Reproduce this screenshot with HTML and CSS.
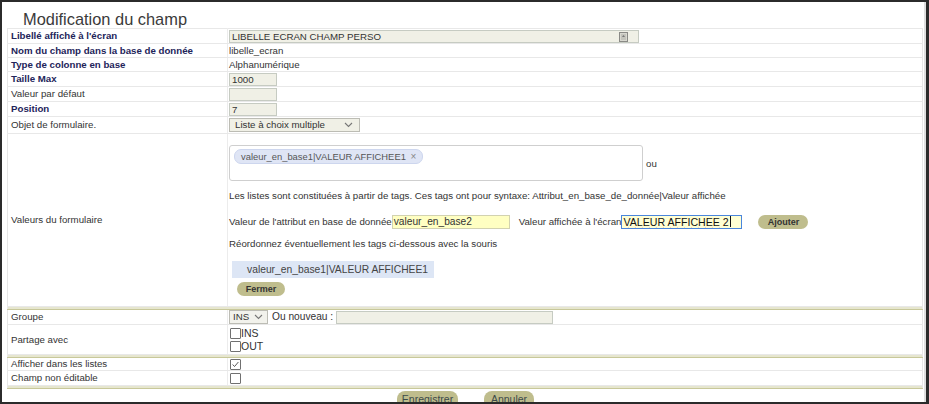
FILE: index.html
```html
<!DOCTYPE html>
<html lang="fr">
<head>
<meta charset="utf-8">
<title>Modification du champ</title>
<link rel="stylesheet" href="styles.css">
</head>
<body>
<div class="frame">
  <div class="content">
    <h1 class="title">Modification du champ</h1>
    <table class="form">
      <tr class="r15">
        <td class="lbl strong">Libellé affiché à l'écran</td>
        <td class="val">
          <span class="field wide">LIBELLE ECRAN CHAMP PERSO
            <svg class="fld-icon" width="9" height="10" viewBox="0 0 9 10"><rect x="0.5" y="0.5" width="8" height="9" fill="#d8d8d0" stroke="#8a8a86"/><rect x="2" y="2" width="5" height="6" fill="#c4c4bc"/><path d="M4.5 3 L6 5 H3 Z" fill="#777"/></svg>
          </span>
        </td>
      </tr>
      <tr class="r14">
        <td class="lbl strong">Nom du champ dans la base de donnée</td>
        <td class="val">libelle_ecran</td>
      </tr>
      <tr class="r14">
        <td class="lbl strong">Type de colonne en base</td>
        <td class="val">Alphanumérique</td>
      </tr>
      <tr class="r15">
        <td class="lbl strong">Taille Max</td>
        <td class="val"><span class="field small">1000</span></td>
      </tr>
      <tr class="r15">
        <td class="lbl">Valeur par défaut</td>
        <td class="val"><span class="field small"></span></td>
      </tr>
      <tr class="r15">
        <td class="lbl strong">Position</td>
        <td class="val"><span class="field small">7</span></td>
      </tr>
      <tr class="r17">
        <td class="lbl">Objet de formulaire.</td>
        <td class="val">
          <span class="select sel-type">Liste à choix multiple
            <svg class="chev" width="9" height="6" viewBox="0 0 9 6"><path d="M1 1 L4.5 4.5 L8 1" fill="none" stroke="#777" stroke-width="1.1"/></svg>
          </span>
        </td>
      </tr>
      <tr>
        <td class="lbl">Valeurs du formulaire</td>
        <td class="val values">
          <div class="tagrow">
            <div class="tagbox"><span class="chip">valeur_en_base1|VALEUR AFFICHEE1 <span class="x">×</span></span></div>
            <span class="ou">ou</span>
          </div>
          <p class="note">Les listes sont constituées à partir de tags. Ces tags ont pour syntaxe: Attribut_en_base_de_donnée|Valeur affichée</p>
          <div class="addrow">
            <span>Valeur de l'attribut en base de donnée</span><span class="yfield y1">valeur_en_base2</span>
            <span class="lbl2">Valeur affichée à l'écran</span><span class="yfield y2"><span class="spell">VALEUR AFFICHEE</span>&nbsp;2<span class="caret"></span></span>
            <span class="btn ajouter">Ajouter</span>
          </div>
          <p class="note">Réordonnez éventuellement les tags ci-dessous avec la souris</p>
          <div class="sortitem">valeur_en_base1|VALEUR AFFICHEE1</div>
          <span class="btn fermer">Fermer</span>
        </td>
      </tr>
      <tr class="sep"><td colspan="2"></td></tr>
      <tr class="r15">
        <td class="lbl">Groupe</td>
        <td class="val">
          <div class="inline">
            <span class="select sel-ins">INS
              <svg class="chev" width="9" height="6" viewBox="0 0 9 6"><path d="M1 1 L4.5 4.5 L8 1" fill="none" stroke="#777" stroke-width="1.1"/></svg>
            </span>
            <span class="onv">Ou nouveau :</span>
            <span class="field nouveau"></span>
          </div>
        </td>
      </tr>
      <tr>
        <td class="lbl">Partage avec</td>
        <td class="val checks">
          <label class="chk"><span class="box"></span>INS</label>
          <label class="chk"><span class="box"></span>OUT</label>
        </td>
      </tr>
      <tr class="sep"><td colspan="2"></td></tr>
      <tr class="r13">
        <td class="lbl">Afficher dans les listes</td>
        <td class="val"><span class="box checked"><svg width="11" height="11" viewBox="0 0 11 11"><path d="M2 5.5 L4.3 8 L9 2.5" fill="none" stroke="#555" stroke-width="1.2"/></svg></span></td>
      </tr>
      <tr class="r15">
        <td class="lbl">Champ non éditable</td>
        <td class="val"><span class="box"></span></td>
      </tr>
      <tr class="sep"><td colspan="2"></td></tr>
    </table>
    <div class="actions">
      <span class="btn big enr">Enregistrer</span>
      <span class="btn big ann">Annuler</span>
    </div>
  </div>
  <div class="scroll"></div>
</div>
</body>
</html>
```

FILE: styles.css
```css
* { box-sizing: border-box; }
html, body { margin: 0; padding: 0; background: #fff; }
body { font-family: "Liberation Sans", Arial, sans-serif; font-size: 9.7px; color: #333; }

.frame {
  width: 929px; height: 404px;
  border-top: 2px solid #2b2b2b;
  border-left: 2px solid #2b2b2b;
  border-right: 3px solid #2b2b2b;
  border-bottom: 2px solid #2b2b2b;
  display: flex; overflow: hidden;
}
.content { flex: 1; padding: 0 1px 0 5px; overflow: hidden; }
.scroll { width: 2px; background: #dedede; }

.title {
  margin: 0; padding: 8px 0 0 16px; height: 26px;
  font-family: "Liberation Sans", Arial, sans-serif; font-weight: normal;
  font-size: 16.4px; line-height: 18px; color: #3a3a3a;
}

.form { width: 100%; border-collapse: collapse; border: 1px solid #e6e6e6; }
.form td { border-top: 1px solid #e8e8e8; border-bottom: 1px solid #e8e8e8; padding: 0; vertical-align: middle; line-height: 12px; }
.lbl { width: 220px; padding-left: 3px !important; border-right: 1px solid #ececec; color: #333; white-space: nowrap; }
.lbl.strong { font-weight: bold; color: #23245a; }
.val { padding-left: 1px !important; color: #333; }

.r13 td { height: 13px; }
.r14 td { height: 14px; }
.r15 td { height: 15px; }
.r17 td { height: 17px; }

.field {
  display: inline-flex; align-items: center; position: relative;
  height: 13px; background: #f0f0e6; border: 1px solid #c6cbc2;
  padding: 0 2px; vertical-align: middle; color: #333; line-height: 11px;
}
.field.wide { width: 410px; }
.field.small { width: 48px; }
.field.nouveau { width: 217px; }
.fld-icon { position: absolute; right: 10px; top: 1px; }

.select {
  display: inline-flex; align-items: center; justify-content: space-between;
  height: 14px; background: #f0f0e6; border: 1px solid #bcbcb4;
  padding: 0 6px 0 5px; vertical-align: middle; color: #333;
}
.sel-type { width: 131px; }
.sel-ins { width: 39px; padding-left: 3px; padding-right: 4px; background: #f2f2ec; }

.values { padding-top: 11px !important; padding-bottom: 10px !important; }
.tagrow { display: flex; align-items: flex-end; }
.tagbox {
  width: 414px; height: 36px; border: 1px solid #cfcfcf; border-radius: 3px;
  padding: 3px 4px;
}
.chip {
  display: inline-block; height: 15px; line-height: 14px;
  background: #dfe5f5; border: 1px solid #cdd6ee; border-radius: 7px;
  padding: 0 6px 0 6px; color: #555; font-size: 9.4px;
}
.chip .x { color: #888; margin-left: 2px; font-size: 10px; }
.ou { margin-left: 3px; margin-bottom: 11px; }
.note { margin: 9px 0 0; line-height: 12px; }
.addrow { display: flex; align-items: center; margin-top: 12px; height: 15px; white-space: nowrap; }
.yfield {
  display: inline-flex; align-items: center; height: 14px;
  background: #ffffc2; border: 1px solid #d2d2b0; padding: 0 1px; white-space: nowrap; overflow: hidden;
}
.y1 { width: 118px; font-size: 10.2px; }
.lbl2 { margin-left: 9px; }
.y2 { width: 121px; font-size: 10.6px; border: 1px solid #4a86dc; background: #ffffd4; color: #111; }
.spell { text-decoration: underline wavy #e03030; text-decoration-thickness: 1px; text-underline-offset: 1px; text-decoration-skip-ink: none; }
.caret { display: inline-block; width: 1px; height: 11px; background: #111; margin-left: 1px; }

.btn {
  display: inline-flex; align-items: center; justify-content: center;
  background: #bfbd8d; border-radius: 8px; color: #333; font-weight: bold;
  font-size: 9px; height: 14px;
}
.ajouter { width: 50px; margin-left: 16px; }
.sortitem {
  margin-top: 11px; width: 202px; height: 17px; line-height: 17px; margin-left: 3px;
  background: #dde6f5; padding-left: 15px; font-size: 10.3px; color: #444;
}
.fermer { width: 48px; margin: 4px 0 0 8px; }

.sep td { height: 3px; padding: 0; border-top: 1px solid #c8c89a; border-bottom: 1px solid #c8c89a; background: #e6e6cf; }

.inline { display: flex; align-items: center; }
.onv { margin: 0 3px 0 4px; font-size: 10.2px; }

.checks { padding-top: 2px !important; padding-bottom: 1px !important; }
.chk { display: flex; align-items: center; height: 13px; line-height: 13px; font-size: 10.5px; }
.box {
  display: inline-flex; align-items: center; justify-content: center;
  width: 11px; height: 11px; border: 1px solid #707070; background: #fff; border-radius: 1px;
  vertical-align: middle; margin-left: 1px;
}
.box.checked svg { display: block; }

.actions { display: flex; padding-left: 390px; gap: 26px; padding-top: 2px; }
.btn.big { height: 16px; font-weight: normal; font-size: 10.5px; color: #3c4a4a; border-radius: 8px 8px 0 0; align-items: flex-start; padding-top: 2px; }
.enr { width: 61px; }
.ann { width: 50px; }
```
